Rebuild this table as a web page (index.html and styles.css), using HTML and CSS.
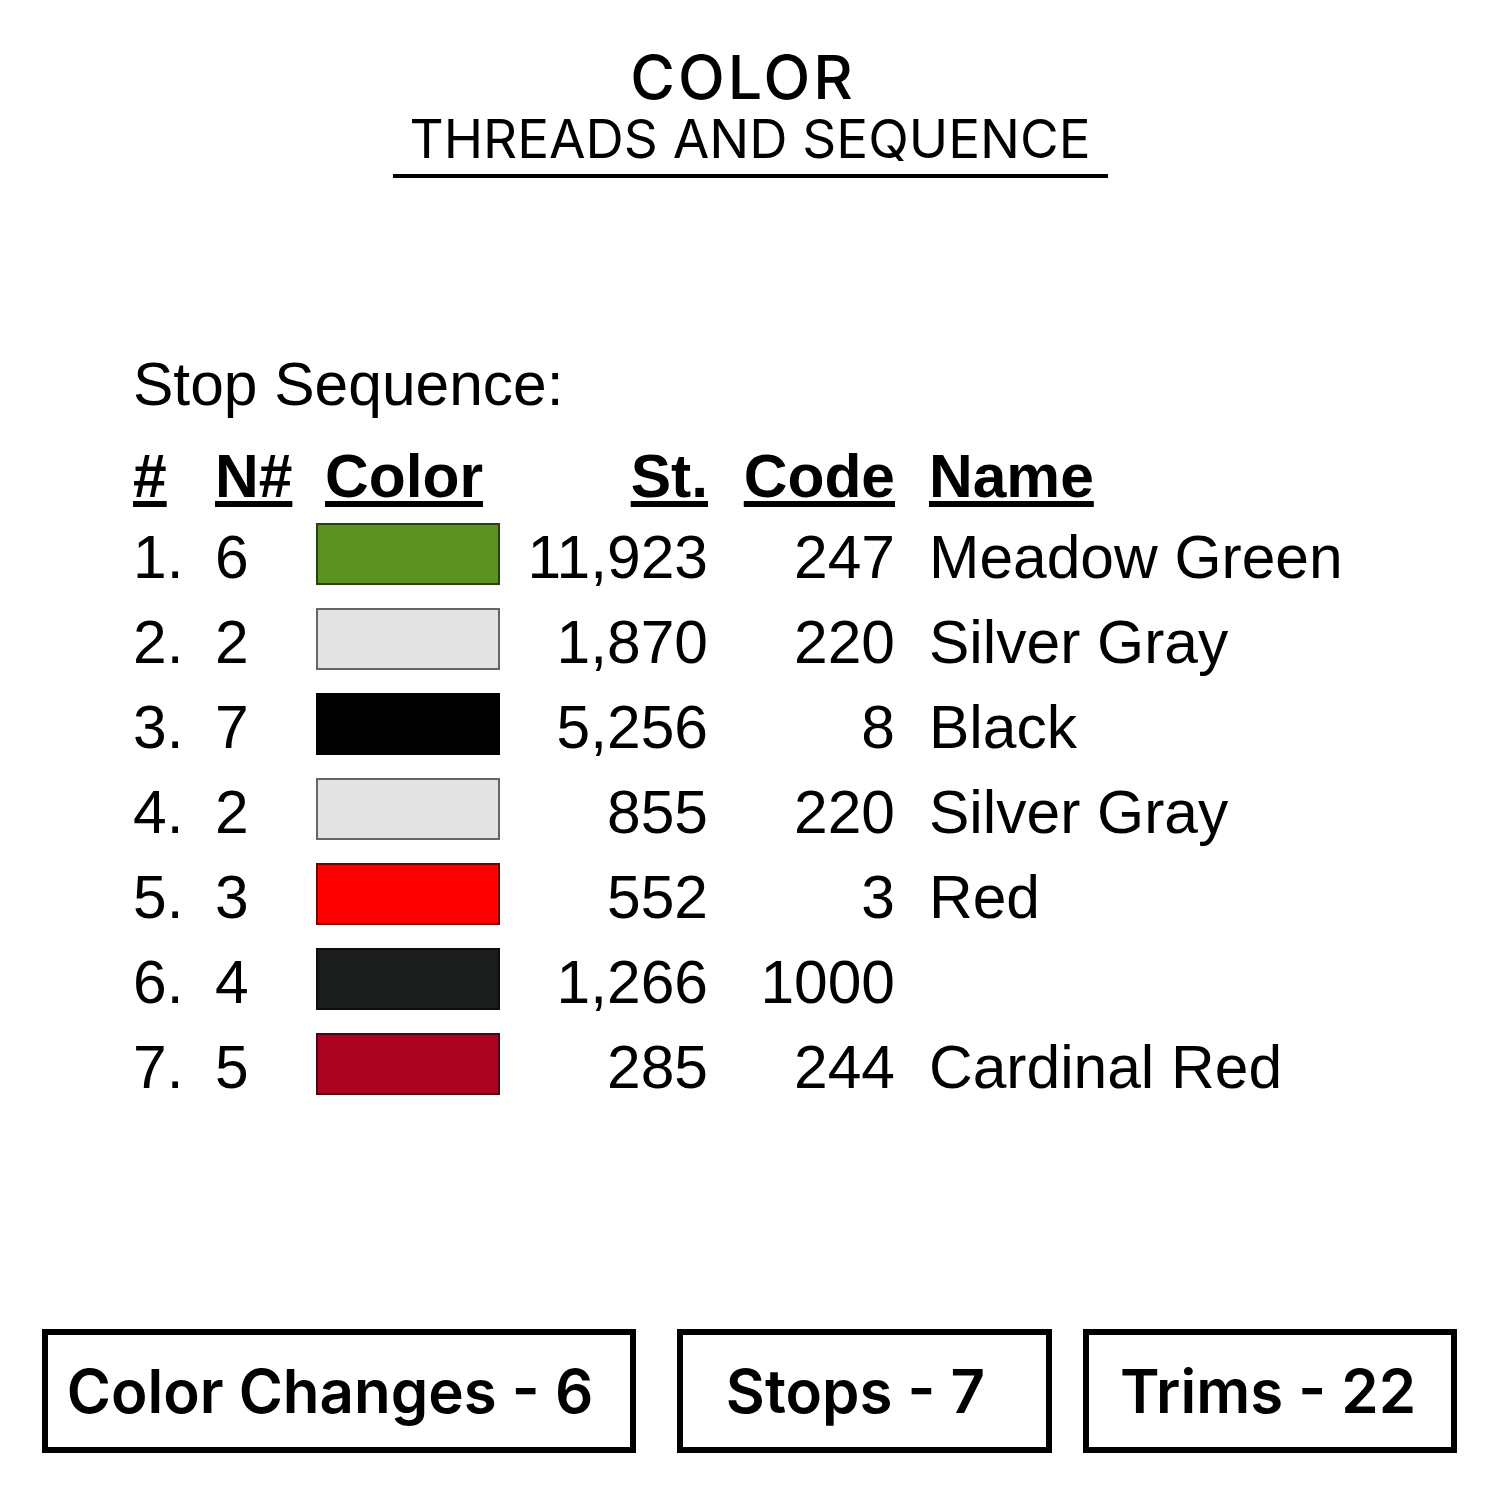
FILE: index.html
```html
<!DOCTYPE html>
<html lang="en">
<head>
<meta charset="utf-8">
<title>Color - Threads and Sequence</title>
<link rel="stylesheet" href="styles.css">
</head>
<body>
<main class="page">
  <header class="title">
    <h1 class="title-main">COLOR</h1>
    <p class="title-sub">THREADS AND SEQUENCE</p>
  </header>

  <section class="sequence">
    <h2 class="seq-title">Stop Sequence:</h2>
    <div class="seq-table">
      <div class="cell head"><span class="u">#</span></div>
      <div class="cell head"><span class="u">N#</span></div>
      <div class="cell head col-color"><span class="u">Color</span></div>
      <div class="cell head num"><span class="u">St.</span></div>
      <div class="cell head num"><span class="u">Code</span></div>
      <div class="cell head name"><span class="u">Name</span></div>

      <div class="cell">1.</div><div class="cell">6</div>
      <div class="cell swatch-cell"><span class="swatch sw-green"></span></div>
      <div class="cell num">11,923</div><div class="cell num">247</div><div class="cell name">Meadow Green</div>

      <div class="cell">2.</div><div class="cell">2</div>
      <div class="cell swatch-cell"><span class="swatch sw-silver"></span></div>
      <div class="cell num">1,870</div><div class="cell num">220</div><div class="cell name">Silver Gray</div>

      <div class="cell">3.</div><div class="cell">7</div>
      <div class="cell swatch-cell"><span class="swatch sw-black"></span></div>
      <div class="cell num">5,256</div><div class="cell num">8</div><div class="cell name">Black</div>

      <div class="cell">4.</div><div class="cell">2</div>
      <div class="cell swatch-cell"><span class="swatch sw-silver"></span></div>
      <div class="cell num">855</div><div class="cell num">220</div><div class="cell name">Silver Gray</div>

      <div class="cell">5.</div><div class="cell">3</div>
      <div class="cell swatch-cell"><span class="swatch sw-red"></span></div>
      <div class="cell num">552</div><div class="cell num">3</div><div class="cell name">Red</div>

      <div class="cell">6.</div><div class="cell">4</div>
      <div class="cell swatch-cell"><span class="swatch sw-dark"></span></div>
      <div class="cell num">1,266</div><div class="cell num">1000</div><div class="cell name"></div>

      <div class="cell">7.</div><div class="cell">5</div>
      <div class="cell swatch-cell"><span class="swatch sw-cardinal"></span></div>
      <div class="cell num">285</div><div class="cell num">244</div><div class="cell name">Cardinal Red</div>
    </div>
  </section>

  <footer class="stats">
    <div class="stat stat-wide">Color Changes - 6</div>
    <div class="stat stat-mid">Stops - 7</div>
    <div class="stat stat-narrow">Trims - 22</div>
  </footer>
</main>
</body>
</html>
```

FILE: styles.css
```css
* { box-sizing: border-box; }

html, body {
  margin: 0;
  padding: 0;
  background: #ffffff;
}

.page {
  width: 1500px;
  height: 1500px;
  display: flex;
  flex-direction: column;
  color: #000;
}

/* ---------- Title ---------- */
.title {
  display: flex;
  flex-direction: column;
  align-items: center;
  margin-top: 47px;
  font-family: Inter, "Open Sans", sans-serif;
}

.title-main {
  margin: 0 14px 0 0;
  font-size: 61px;
  line-height: 60px;
  font-weight: 500;
  letter-spacing: 3px;
}

.title-sub {
  margin: 7px 0 0;
  width: 715px;
  text-align: center;
  font-size: 53px;
  line-height: 50px;
  font-weight: 400;
  padding-bottom: 10px;
  border-bottom: 4px solid #000;
}

/* ---------- Sequence table ---------- */
.sequence {
  margin-top: 171px;
  padding-left: 133px;
  font-family: "Liberation Sans", Arial, sans-serif;
  font-size: 60.5px;
}

.seq-title {
  margin: 0;
  font-size: 60.5px;
  font-weight: 400;
  line-height: 70px;
}

.seq-table {
  margin-top: 15px;
  display: grid;
  grid-template-columns: 82px 101px 184px 208px 187px 420px;
  grid-template-rows: 81px repeat(7, 85px);
}

.cell {
  line-height: 85px;
  white-space: nowrap;
}

.head {
  font-weight: 700;
  align-self: start;
}

.u {
  text-decoration: underline;
  text-decoration-thickness: 6px;
  text-underline-offset: 4px;
}

.col-color { padding-left: 9px; }

.num { text-align: right; }

.name { padding-left: 34px; }

.swatch-cell {
  display: flex;
  align-items: center;
  padding-bottom: 8px;
}

.swatch {
  display: block;
  width: 184px;
  height: 62px;
  border: 2px solid rgba(0, 0, 0, 0.55);
}

.sw-green    { background: #5b9220; }
.sw-silver   { background: #e3e3e3; }
.sw-black    { background: #000000; }
.sw-red      { background: #ff0000; }
.sw-dark     { background: #1b1e1d; }
.sw-cardinal { background: #aa0220; }

/* ---------- Stats boxes ---------- */
.stats {
  margin-top: 219px;
  padding-left: 42px;
  display: flex;
  gap: 31px;
  font-family: Inter, "Open Sans", sans-serif;
  font-weight: 600;
  font-size: 60px;
}

.stat {
  height: 124px;
  border: 6px solid #000;
  display: flex;
  align-items: center;
  justify-content: center;
  white-space: nowrap;
}

.stat-wide   { width: 594px; margin-right: 10px; padding-right: 18px; }
.stat-mid    { width: 375px; padding-right: 18px; }
.stat-narrow { width: 374px; padding-right: 4px; }
```
